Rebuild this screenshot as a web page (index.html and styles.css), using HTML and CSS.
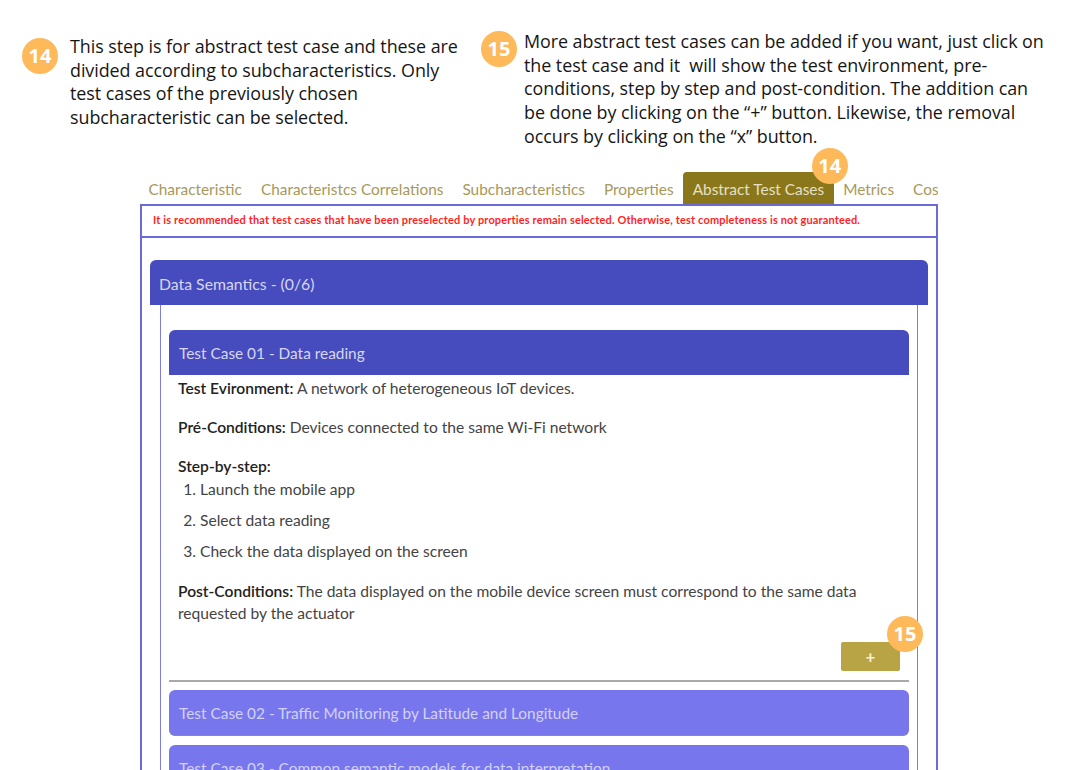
FILE: index.html
```html
<!DOCTYPE html>
<html lang="en">
<head>
<meta charset="utf-8">
<title>Abstract Test Cases</title>
<link rel="stylesheet" href="styles.css">
</head>
<body>
<div class="notes">
  <div class="note note-a">
    <span class="badge">14</span>
    <p class="note-text">This step is for abstract test case and these are divided according to subcharacteristics. Only test cases of the previously chosen subcharacteristic can be selected.</p>
  </div>
  <div class="note note-b">
    <span class="badge">15</span>
    <p class="note-text">More abstract test cases can be added if you want, just click on the test case and it&nbsp; will show the test environment, pre-conditions, step by step and post-condition. The addition can be done by clicking on the “+” button. Likewise, the removal occurs by clicking on the “x” button.</p>
  </div>
</div>

<div class="app">
  <nav class="tabs">
    <span class="tab">Characteristic</span>
    <span class="tab">Characteristcs Correlations</span>
    <span class="tab">Subcharacteristics</span>
    <span class="tab">Properties</span>
    <span class="tab active">Abstract Test Cases<span class="badge badge-tab">14</span></span>
    <span class="tab">Metrics</span>
    <span class="tab">Costs</span>
  </nav>
  <div class="panel">
    <div class="alert">It is recommended that test cases that have been preselected by properties remain selected. Otherwise, test completeness is not guaranteed.</div>
    <div class="panel-body">
      <section class="card">
        <header class="card-head">Data Semantics - (0/6)</header>
        <div class="card-body">
          <div class="tc open">
            <div class="tc-head">Test Case 01 - Data reading</div>
            <div class="tc-body">
              <p><b>Test Evironment:</b> A network of heterogeneous IoT devices.</p>
              <p><b>Pré-Conditions:</b> Devices connected to the same Wi-Fi network</p>
              <div class="steps">
                <div class="steps-title">Step-by-step:</div>
                <ol>
                  <li>Launch the mobile app</li>
                  <li>Select data reading</li>
                  <li>Check the data displayed on the screen</li>
                </ol>
              </div>
              <p><b>Post-Conditions:</b> The data displayed on the mobile device screen must correspond to the same data requested by the actuator</p>
              <div class="actions">
                <button class="add">+<span class="badge badge-btn">15</span></button>
              </div>
            </div>
          </div>
          <hr class="sep">
          <div class="tc closed"><div class="tc-head">Test Case 02 - Traffic Monitoring by Latitude and Longitude</div></div>
          <div class="tc closed"><div class="tc-head">Test Case 03 - Common semantic models for data interpretation</div></div>
        </div>
      </section>
    </div>
  </div>
</div>
</body>
</html>
```

FILE: styles.css
```css
html, body {
  margin: 0;
  padding: 0;
  background: #ffffff;
  height: 770px;
  overflow: hidden;
}
body {
  font-family: "Lato", "Noto Sans", sans-serif;
  color: #333;
}

/* annotations */
.notes {
  display: flex;
  height: 172px;
}
.note {
  display: flex;
  align-items: flex-start;
}
.note-a {
  padding: 38px 0 0 22px;
  width: 450px;
  gap: 12px;
}
.note-b {
  padding: 31px 0 0 9px;
  gap: 7px;
}
.note-text {
  margin: 0;
  font-family: "Open Sans", "Noto Sans", sans-serif;
  line-height: 23.7px;
  color: #161616;
  font-size: 17.9px;
}
.note-a .note-text {
  margin-top: -3px;
  width: 402px;
  letter-spacing: -0.05px;
}
.note-b .note-text {
  margin-top: -1px;
  width: 526px;
  letter-spacing: -0.05px;
}

.badge {
  flex: none;
  width: 36px;
  height: 36px;
  border-radius: 50%;
  background: #fdb95a;
  color: #fff;
  font-family: "Open Sans", "Noto Sans", sans-serif;
  font-weight: 700;
  font-size: 20px;
  line-height: 36px;
  text-align: center;
  letter-spacing: 0;
}

/* app */
.app {
  margin-left: 139px;
  width: 799px;
}
.tabs {
  display: flex;
  height: 32px;
  overflow-x: clip;
  overflow-y: visible;
  white-space: nowrap;
}
.tab {
  position: relative;
  flex: none;
  padding: 0 9.5px;
  line-height: 34px;
  font-size: 15.4px;
  color: #a8985a;
  border-radius: 4px 4px 0 0;
}
.tab.active {
  background: #8a761b;
  color: #e6e0c6;
}
.badge-tab {
  position: absolute;
  right: -14px;
  top: -24px;
}

.panel {
  border: 2px solid #6a6ad8;
  border-bottom: none;
  margin-left: 1px;
  height: 600px;
}
.alert {
  height: 30px;
  border-bottom: 2px solid #6a6ad8;
  padding-left: 11px;
  font-size: 11px;
  font-weight: 700;
  line-height: 28px;
  color: #ff1f1f;
  letter-spacing: 0.15px;
  white-space: nowrap;
}
.panel-body {
  padding: 22px 8px 0 8px;
}
.card-head {
  height: 45px;
  background: #464bbd;
  border-radius: 6px 6px 0 0;
  color: #d6d7f2;
  font-size: 15.8px;
  line-height: 47px;
  padding-left: 9px;
}
.card-body {
  margin: 0 10px;
  border: 1px solid #7e7ee2;
  border-top: none;
  padding: 25px 8px 0 8px;
}
.tc-head {
  height: 45px;
  background: #464bbd;
  border-radius: 6px 6px 0 0;
  color: #d6d7f2;
  font-size: 15.4px;
  line-height: 47px;
  padding-left: 10px;
}
.tc-body {
  padding: 2px 9px 0 9px;
  font-size: 15.6px;
  line-height: 22px;
  color: #444;
}
.tc-body p {
  margin: 0 0 17px 0;
}
.tc-body b {
  color: #222;
  font-weight: 600;
}
.steps {
  margin-bottom: 18px;
}
.steps-title { color: #222; font-weight: 600; margin-bottom: 1px; }
.steps ol {
  margin: 1px 0 0 0;
  padding-left: 22px;
}
.steps li {
  margin-bottom: 9px;
}
.steps li:last-child { margin-bottom: 0; }
.actions {
  display: flex;
  justify-content: flex-end;
  padding: 1px 0 9px 0;
}
.add {
  position: relative;
  width: 59px;
  height: 29px;
  border: none;
  border-radius: 2px;
  background: #b8a444;
  color: #f4efd8;
  font-family: "Lato", sans-serif;
  font-size: 17px;
  font-weight: 700;
  padding: 0;
}
.badge-btn {
  position: absolute;
  left: 46px;
  top: -26px;
}
.sep {
  border: none;
  border-top: 2px solid #a9a9a9;
  margin: 0 0 8px 0;
}
.tc.closed {
  margin-bottom: 9px;
}
.tc.closed .tc-head {
  background: #7876ec;
  color: #d2d2f8;
  border-radius: 6px;
  border-bottom: 1px solid #8b8b9a;
  height: 45px;
}
```
